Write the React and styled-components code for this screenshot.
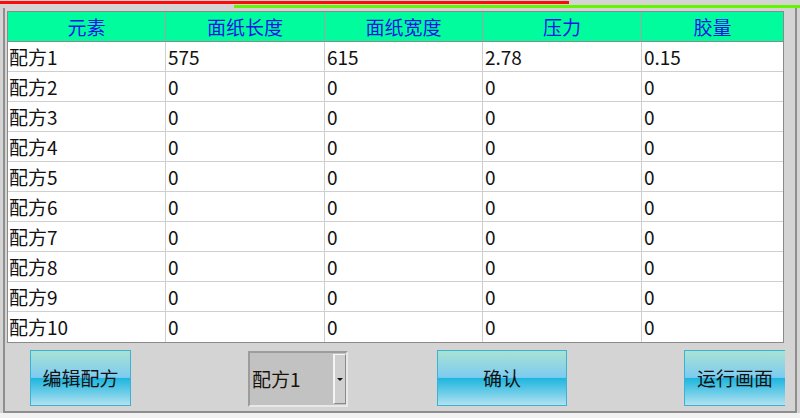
import React from 'react';
import styled, { createGlobalStyle } from 'styled-components';

const GlobalStyle = createGlobalStyle`
  html, body {
    margin: 0;
    padding: 0;
    background: #e6e6e6;
  }
  * {
    box-sizing: border-box;
  }
`;

const Screen = styled.div`
  width: 800px;
  height: 418px;
  overflow: hidden;
  background: #d4d4d4;
  font-family: "Noto Sans CJK SC", "Noto Sans", sans-serif;
  display: flex;
  flex-direction: column;
`;

const StatusBar = styled.div`
  height: 3px;
  flex-shrink: 0;
  width: ${(p) => p.$width}px;
  margin-left: ${(p) => p.$left}px;
  margin-top: ${(p) => p.$top}px;
  background: ${(p) => p.$color};
`;

const Panel = styled.div`
  margin-left: 3px;
  width: 794px;
  flex: 1;
  border-left: 2px solid #8e8e8e;
  border-right: 2px solid #8e8e8e;
  border-bottom: 2px solid #8e8e8e;
  padding: 3px 0 0 2px;
  display: flex;
  flex-direction: column;
`;

const Footer = styled.div`
  height: 5px;
  flex-shrink: 0;
  background: #f2f2f2;
`;

const Table = styled.div`
  width: 777px;
  border: 1px solid #8a8a8a;
  background: #ffffff;
  display: grid;
  grid-template-columns: 158px 159px 158px 159px 141px;
`;

const HeadCell = styled.div`
  height: 30px;
  background: #00fc9c;
  color: #1414e6;
  font-size: 19px;
  display: flex;
  align-items: center;
  justify-content: center;
  border-right: ${(p) => (p.$last ? 'none' : '1px solid #a2a2a2')};
  border-bottom: 1px solid #8a8a8a;
`;

const Cell = styled.div`
  height: 30px;
  color: #111111;
  font-size: 19px;
  display: flex;
  align-items: center;
  padding-left: ${(p) => (p.$first ? 1 : 2)}px;
  padding-bottom: 1px;
  border-right: ${(p) => (p.$last ? 'none' : '1px solid #cfcfcf')};
  border-bottom: ${(p) => (p.$bottom ? 'none' : '1px solid #cfcfcf')};
`;

const Controls = styled.div`
  display: flex;
  align-items: flex-start;
  padding-top: 7px;
  padding-left: 23px;
`;

const Button = styled.button`
  width: ${(p) => p.$width}px;
  height: 56px;
  margin-left: ${(p) => p.$gap}px;
  border: 1px solid #3ab3d3;
  border-right: ${(p) => (p.$clipped ? 'none' : '1px solid #3ab3d3')};
  background: linear-gradient(
    to bottom,
    #a9e2d4 0%,
    #7ccbf1 49%,
    #1db5de 50%,
    #5cc8e6 72%,
    #b2e1f0 100%
  );
  font-family: inherit;
  font-size: 19px;
  color: #111111;
  padding: 0 0 2px;
  cursor: pointer;
`;

const Select = styled.div`
  width: 100px;
  height: 56px;
  margin-left: ${(p) => p.$gap}px;
  margin-top: 1px;
  border: 2px solid #9c9c9c;
  border-right-color: #e8e8e8;
  border-bottom-color: #e8e8e8;
  background: #c2c2c2;
  display: flex;
  align-items: stretch;
`;

const SelectText = styled.div`
  flex: 1;
  display: flex;
  align-items: center;
  padding-left: 2px;
  padding-bottom: 2px;
  font-size: 19px;
  color: #1a1208;
`;

const SelectArrow = styled.div`
  width: 13px;
  margin: 1px 0;
  background: #cfcfcf;
  border-left: 2px solid #f4f4f4;
  border-right: 1px solid #8a8a8a;
  border-top: 1px solid #f4f4f4;
  border-bottom: 1px solid #8a8a8a;
  display: flex;
  align-items: center;
  justify-content: center;

  &::after {
    content: '';
    border-left: 3px solid transparent;
    border-right: 3px solid transparent;
    border-top: 3px solid #111;
  }
`;

const headers = ['元素', '面纸长度', '面纸宽度', '压力', '胶量'];

const rows = [
  ['配方1', '575', '615', '2.78', '0.15'],
  ...Array.from({ length: 9 }, (_, i) => [`配方${i + 2}`, '0', '0', '0', '0']),
];

export default function App() {
  return (
    <>
      <GlobalStyle />
      <Screen>
        <StatusBar $width={569} $left={0} $top={1} $color="#ff0a0a" />
        <StatusBar $width={566} $left={234} $top={1} $color="#66f500" />
        <Panel>
          <Table>
            {headers.map((h, i) => (
              <HeadCell key={h} $last={i === headers.length - 1}>
                {h}
              </HeadCell>
            ))}
            {rows.map((row, r) =>
              row.map((v, c) => (
                <Cell
                  key={`${r}-${c}`}
                  $first={c === 0}
                  $last={c === row.length - 1}
                  $bottom={r === rows.length - 1}
                >
                  {v}
                </Cell>
              ))
            )}
          </Table>
          <Controls>
            <Button $width={101} $gap={0}>编辑配方</Button>
            <Select $gap={117}>
              <SelectText>配方1</SelectText>
              <SelectArrow />
            </Select>
            <Button $width={130} $gap={89}>确认</Button>
            <Button $width={101} $gap={117} $clipped>运行画面</Button>
          </Controls>
        </Panel>
        <Footer />
      </Screen>
    </>
  );
}
